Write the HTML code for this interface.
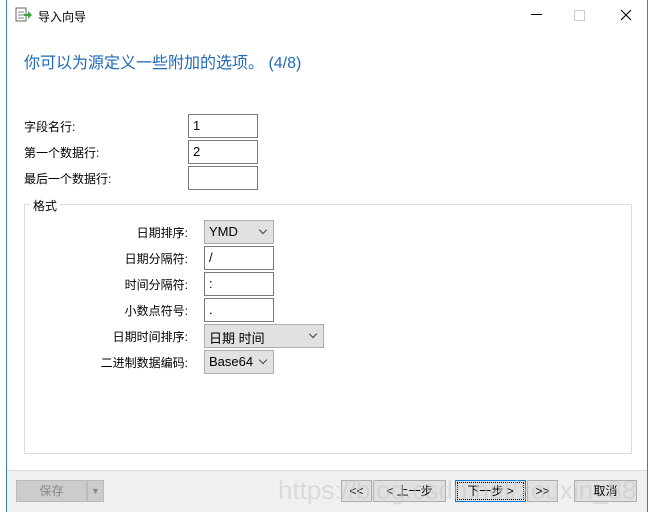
<!DOCTYPE html>
<html><head><meta charset="utf-8"><style>
body{margin:0;width:656px;height:519px;background:#fff;font-family:"Liberation Sans","Microsoft YaHei","Noto Sans CJK SC",sans-serif;font-size:12px;color:#000;position:relative;overflow:hidden}
.a{position:absolute}
.win{left:6px;top:0;width:642px;height:512px;border:1px solid #3c7fb1;border-top:none;box-sizing:border-box}
.inp{position:absolute;border:1px solid #7a7a7a;background:#fff;height:24px;box-sizing:border-box;padding:3px 0 0 4px;font-size:13px}
.sel{position:absolute;border:1px solid #adadad;background:#e1e1e1;height:24px;box-sizing:border-box;padding:3px 0 0 4px;font-size:13px}
.sel:after{content:"";position:absolute;right:7px;top:6px;width:5px;height:5px;border-right:1px solid #444;border-bottom:1px solid #444;transform:rotate(45deg)}
.lbl{position:absolute;text-align:right;font-size:12px}
.btn{position:absolute;top:480px;height:22px;border:1px solid #adadad;background:#e1e1e1;box-sizing:border-box;text-align:center;line-height:20px;font-size:12px}
</style></head><body>
<div class="a win"></div>
<div class="a" style="left:7px;top:0;width:640px;height:32px;background:#fff"></div>
<svg class="a" style="left:15px;top:7px" width="18" height="16"><rect x="1" y="1" width="10" height="13" fill="#fff" stroke="#666"/><line x1="3" y1="5" x2="9" y2="5" stroke="#888"/><line x1="3" y1="8" x2="9" y2="8" stroke="#888"/><line x1="3" y1="11" x2="9" y2="11" stroke="#888"/><path d="M9 7h4V4l4 4-4 4V9H9z" fill="#3aa63a"/></svg>
<div class="a" style="left:38px;top:8px;font-size:12px">导入向导</div>
<div class="a" style="left:531px;top:14px;width:11px;border-top:1px solid #000"></div>
<div class="a" style="left:574px;top:10px;width:9px;height:9px;border:1px solid #ccc"></div>
<svg class="a" style="left:620px;top:9px" width="12" height="12"><path d="M1 1L11 11M11 1L1 11" stroke="#000" stroke-width="1.1"/></svg>
<div class="a" style="left:24px;top:49px;font-size:16px;color:#1e6ab4">你可以为源定义一些附加的选项。 (4/8)</div>
<div class="lbl" style="left:24px;top:118px">字段名行:</div>
<div class="lbl" style="left:24px;top:144px">第一个数据行:</div>
<div class="lbl" style="left:24px;top:170px">最后一个数据行:</div>
<div class="inp" style="left:188px;top:114px;width:70px">1</div>
<div class="inp" style="left:188px;top:140px;width:70px">2</div>
<div class="inp" style="left:188px;top:166px;width:70px"></div>
<div class="a" style="left:24px;top:204px;width:606px;height:248px;border:1px solid #dcdcdc"></div>
<div class="a" style="left:30px;top:197px;background:#fff;padding:0 3px">格式</div>
<div class="lbl" style="left:60px;width:128px;top:224px">日期排序:</div>
<div class="lbl" style="left:60px;width:128px;top:250px">日期分隔符:</div>
<div class="lbl" style="left:60px;width:128px;top:276px">时间分隔符:</div>
<div class="lbl" style="left:60px;width:128px;top:302px">小数点符号:</div>
<div class="lbl" style="left:60px;width:128px;top:328px">日期时间排序:</div>
<div class="lbl" style="left:60px;width:128px;top:354px">二进制数据编码:</div>
<div class="sel" style="left:204px;top:220px;width:70px">YMD</div>
<div class="inp" style="left:204px;top:246px;width:70px">/</div>
<div class="inp" style="left:204px;top:272px;width:70px">:</div>
<div class="inp" style="left:204px;top:298px;width:70px">.</div>
<div class="sel" style="left:204px;top:324px;width:120px">日期 时间</div>
<div class="sel" style="left:204px;top:350px;width:70px">Base64</div>
<div class="a" style="left:7px;top:470px;width:640px;height:41px;background:#f0f0f0;border-top:1px solid #dcdcdc"></div>
<div class="btn" style="left:16px;width:71px;background:#ccc;color:#888;border-color:#bbb">保存</div>
<div class="btn" style="left:87px;width:17px;background:#ccc;color:#888;border-color:#bbb;font-size:9px">▼</div>
<div class="btn" style="left:341px;width:31px">&lt;&lt;</div>
<div class="btn" style="left:373px;width:73px">&lt; 上一步</div>
<div class="btn" style="left:455px;width:71px;border:1px solid #0078d7;outline:1px dotted #000;outline-offset:-3px">下一步 &gt;</div>
<div class="btn" style="left:527px;width:31px">&gt;&gt;</div>
<div class="btn" style="left:574px;width:63px">取消</div>
<div class="a" style="left:278px;top:475px;font-size:26px;color:rgba(200,200,200,0.55);white-space:nowrap">https://blog.csdn.net/zouxin_88</div>
</body></html>
